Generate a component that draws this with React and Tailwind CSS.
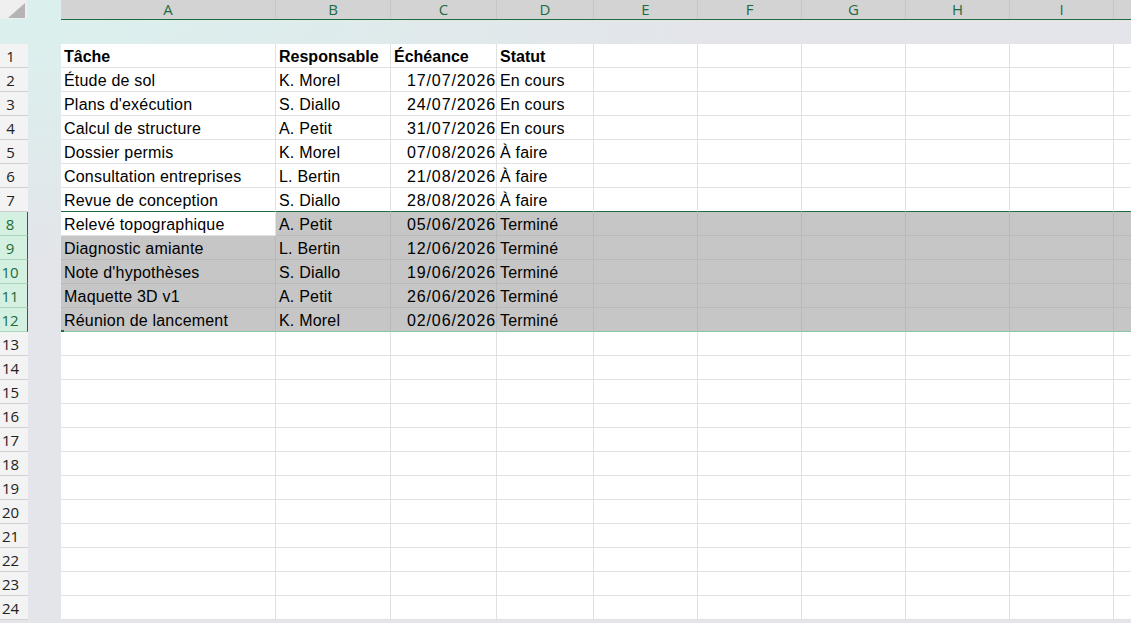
import React from "react";

const colW = [
  "w-[215px]",
  "w-[115px]",
  "w-[106px]",
  "w-[97px]",
  "w-[104px]",
  "w-[104px]",
  "w-[104px]",
  "w-[104px]",
  "w-[104px]",
  "w-[104px]",
];
const letters = ["A", "B", "C", "D", "E", "F", "G", "H", "I", ""];

const data = [
  ["Tâche", "Responsable", "Échéance", "Statut"],
  ["Étude de sol", "K. Morel", "17/07/2026", "En cours"],
  ["Plans d'exécution", "S. Diallo", "24/07/2026", "En cours"],
  ["Calcul de structure", "A. Petit", "31/07/2026", "En cours"],
  ["Dossier permis", "K. Morel", "07/08/2026", "À faire"],
  ["Consultation entreprises", "L. Bertin", "21/08/2026", "À faire"],
  ["Revue de conception", "S. Diallo", "28/08/2026", "À faire"],
  ["Relevé topographique", "A. Petit", "05/06/2026", "Terminé"],
  ["Diagnostic amiante", "L. Bertin", "12/06/2026", "Terminé"],
  ["Note d'hypothèses", "S. Diallo", "19/06/2026", "Terminé"],
  ["Maquette 3D v1", "A. Petit", "26/06/2026", "Terminé"],
  ["Réunion de lancement", "K. Morel", "02/06/2026", "Terminé"],
];

function Cell({ row, col }) {
  const sel = row >= 8 && row <= 12;
  const active = row === 8 && col === 0;
  const text = data[row - 1] ? data[row - 1][col] : undefined;
  let border = "border-[#e1e1e1]";
  let bg = "bg-white";
  if (sel && !active) {
    bg = "bg-[#c6c6c6]";
    border = "border-[#b9b9b9]";
  }
  let bottom = "";
  if (row === 7) bottom = "border-b-[#1e6b41]";
  if (row === 12) bottom = "border-b-[#8cc5a5]";
  const isDate = col === 2 && row > 1;
  const align = isDate
    ? "justify-end pr-0 tracking-[0.9px]"
    : row === 1
    ? "pl-[3px]"
    : "pl-[3px] tracking-[0.2px]";
  const weight = row === 1 ? "font-bold" : "";
  return (
    <div
      className={`${colW[col]} shrink-0 h-full border-r border-b ${border} ${bottom} ${bg} relative flex items-center pt-[2px] ${align} ${weight} overflow-visible whitespace-nowrap text-[16px] leading-none`}
    >
      {text}
      {row === 12 && col === 0 && (
        <div className="absolute left-0 bottom-[-2px] w-[3px] h-[3px] bg-[#1e6b41]" />
      )}
    </div>
  );
}

function RowHeader({ row }) {
  const sel = row >= 8 && row <= 12;
  return (
    <div
      className={`w-[28px] shrink-0 h-full border-b flex items-center justify-center pr-[7px] pt-[1px] font-['Open_Sans',sans-serif] text-[15px] leading-none ${
        sel
          ? "bg-[#d3f0e0] border-b-[#a9d6bc] border-r border-r-[#1e6b41] text-[#1e6b41]"
          : "bg-[#f3f3f3] border-b-[#d0d0d0] text-[#222]"
      }`}
    >
      {row}
    </div>
  );
}

export default function App() {
  const rows = Array.from({ length: 24 }, (_, i) => i + 1);
  return (
    <div className="w-[1131px] h-[623px] overflow-hidden bg-[radial-gradient(700px_260px_at_0_0,#daf1ee,#e3e5ea)] font-['Liberation_Sans',Arial,sans-serif] text-black">
      <div className="flex h-[20px]">
        <div className="w-[27px] h-[19px] shrink-0 bg-[#efefef] relative">
          <svg className="absolute left-0 top-0" width="27" height="19" viewBox="0 0 27 19">
            <polygon points="25,3 25,18 8,18" fill="#b4b4b4" />
          </svg>
        </div>
        <div className="w-[34px] shrink-0" />
        <div className="flex h-[20px] border-b border-[#1e6b41] bg-[#d3d3d3]">
          {letters.map((l, i) => (
            <div
              key={i}
              className={`${colW[i]} shrink-0 h-[19px] border-r border-[#c6c6c6] flex items-center justify-center font-['Open_Sans',sans-serif] text-[15px] leading-none text-[#1e6b41]`}
            >
              {l}
            </div>
          ))}
        </div>
      </div>
      <div className="h-[24px]" />
      {rows.map((r) => (
        <div key={r} className="flex h-[24px]">
          <RowHeader row={r} />
          <div className="w-[33px] shrink-0" />
          {letters.map((l, c) => (
            <Cell key={c} row={r} col={c} />
          ))}
        </div>
      ))}
    </div>
  );
}
